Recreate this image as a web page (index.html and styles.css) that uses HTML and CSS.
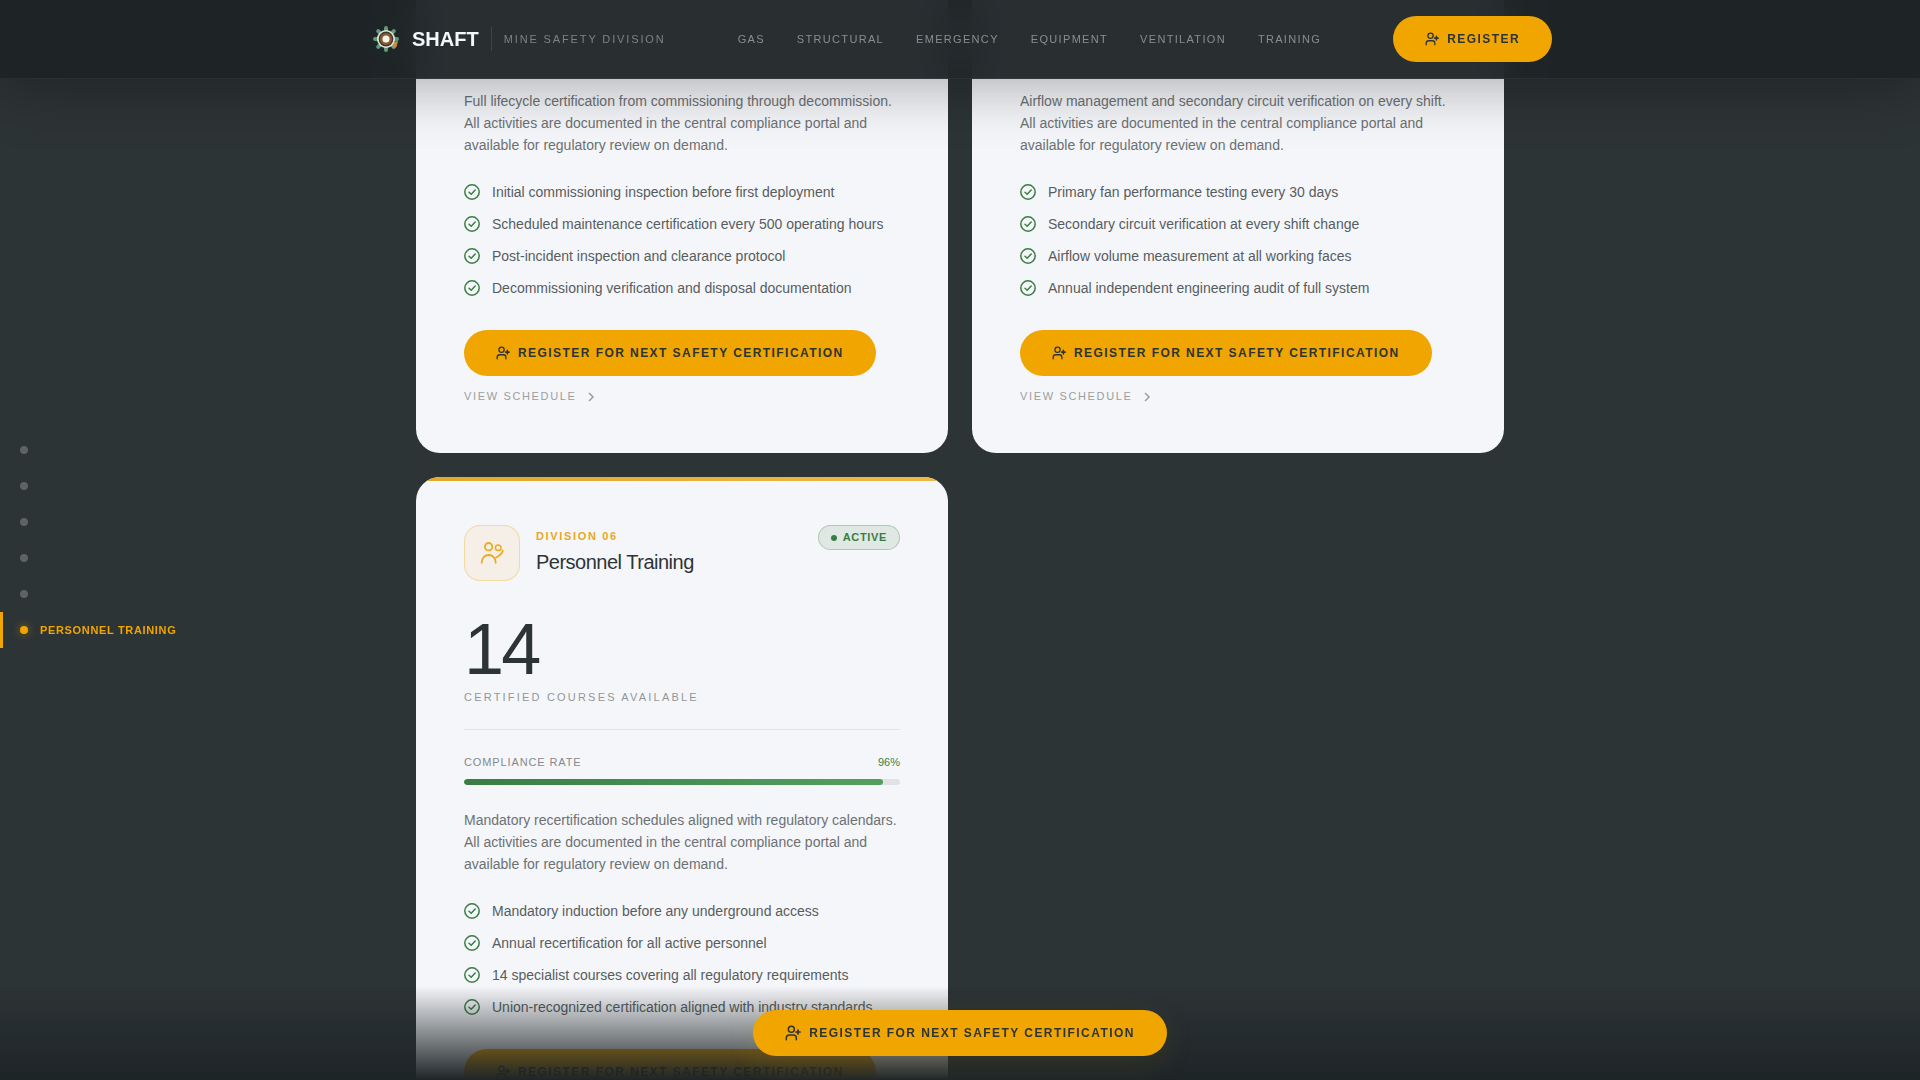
FILE: index.html
```html
<!DOCTYPE html>
<html lang="en">
<head>
    <meta charset="UTF-8">
    <meta name="viewport" content="width=device-width, initial-scale=1.0">
    <title>SHAFT - Mine Safety Division</title>
    <link rel="stylesheet" href="styles.css">
</head>
<body>
    <!-- shared icons -->
    <svg class="icon-defs" aria-hidden="true">
        <symbol id="icon-register" viewBox="0 0 24 24">
            <g fill="none" stroke="currentColor" stroke-width="2.200" stroke-linecap="round" stroke-linejoin="round">
                <circle cx="9.500" cy="6.500" r="4.500"/>
                <path d="M2 22v-2.500a4.500 4.500 0 0 1 4.500-4.500h6a4.500 4.500 0 0 1 4.500 4.500V22"/>
                <path d="M19.500 7.500v6M16.500 10.500h6" stroke-width="2.600"/>
            </g>
        </symbol>
        <symbol id="icon-check" viewBox="0 0 16 16">
            <g fill="none" stroke="currentColor" stroke-width="1.500" stroke-linecap="round" stroke-linejoin="round">
                <circle cx="8" cy="8" r="7.200"/>
                <path d="M5 8.200l2.200 2L11.200 6"/>
            </g>
        </symbol>
        <symbol id="icon-chevron" viewBox="0 0 16 16">
            <path d="M6 4l4 4-4 4" fill="none" stroke="currentColor" stroke-width="1.500"/>
        </symbol>
    </svg>

    <header class="site-header">
        <div class="header-inner">
            <div class="brand">
                <svg class="brand-logo" viewBox="0 0 36 36" aria-hidden="true">
                    <g stroke="#5f9a78" stroke-width="4" stroke-linecap="round">
                        <path d="M18 7v22M7 18h22M10.200 10.200l15.600 15.600M25.800 10.200L10.200 25.800"/>
                    </g>
                    <path d="M25 21l5-1-1.500 6-4 1.500z" fill="#c88a45"/>
                    <circle cx="18" cy="18" r="9" fill="#dfe9df"/>
                    <circle cx="18" cy="18" r="7.400" fill="#3d3a2c"/>
                    <circle cx="18" cy="18" r="6" fill="#8b5a33"/>
                    <circle cx="18" cy="18" r="3.500" fill="#fff8ea"/>
                </svg>
                <span class="brand-name">SHAFT</span>
                <span class="brand-division">MINE SAFETY DIVISION</span>
            </div>
            <nav class="main-nav">
                <a href="#gas">GAS</a>
                <a href="#structural">STRUCTURAL</a>
                <a href="#emergency">EMERGENCY</a>
                <a href="#equipment">EQUIPMENT</a>
                <a href="#ventilation">VENTILATION</a>
                <a href="#training">TRAINING</a>
            </nav>
            <button class="btn" type="button"><svg class="btn-icon"><use href="#icon-register"/></svg>REGISTER</button>
        </div>
    </header>

    <nav class="side-nav" aria-label="Divisions">
        <a class="side-link" href="#gas" aria-label="Gas"><span class="side-dot"></span></a>
        <a class="side-link" href="#structural" aria-label="Structural"><span class="side-dot"></span></a>
        <a class="side-link" href="#emergency" aria-label="Emergency"><span class="side-dot"></span></a>
        <a class="side-link" href="#equipment" aria-label="Equipment"><span class="side-dot"></span></a>
        <a class="side-link" href="#ventilation" aria-label="Ventilation"><span class="side-dot"></span></a>
        <a class="side-link active" href="#training"><span class="side-dot"></span>PERSONNEL TRAINING</a>
    </nav>

    <main class="cards">
        <article class="card card-continued" id="equipment">
            <p class="card-text">Full lifecycle certification from commissioning through decommission. All activities are documented in the central compliance portal and available for regulatory review on demand.</p>
            <ul class="check-list">
                <li><svg><use href="#icon-check"/></svg>Initial commissioning inspection before first deployment</li>
                <li><svg><use href="#icon-check"/></svg>Scheduled maintenance certification every 500 operating hours</li>
                <li><svg><use href="#icon-check"/></svg>Post-incident inspection and clearance protocol</li>
                <li><svg><use href="#icon-check"/></svg>Decommissioning verification and disposal documentation</li>
            </ul>
            <button class="btn" type="button"><svg class="btn-icon"><use href="#icon-register"/></svg>REGISTER FOR NEXT SAFETY CERTIFICATION</button>
            <a class="schedule-link" href="#schedule">VIEW SCHEDULE<svg><use href="#icon-chevron"/></svg></a>
        </article>

        <article class="card card-continued" id="ventilation">
            <p class="card-text">Airflow management and secondary circuit verification on every shift. All activities are documented in the central compliance portal and available for regulatory review on demand.</p>
            <ul class="check-list">
                <li><svg><use href="#icon-check"/></svg>Primary fan performance testing every 30 days</li>
                <li><svg><use href="#icon-check"/></svg>Secondary circuit verification at every shift change</li>
                <li><svg><use href="#icon-check"/></svg>Airflow volume measurement at all working faces</li>
                <li><svg><use href="#icon-check"/></svg>Annual independent engineering audit of full system</li>
            </ul>
            <button class="btn" type="button"><svg class="btn-icon"><use href="#icon-register"/></svg>REGISTER FOR NEXT SAFETY CERTIFICATION</button>
            <a class="schedule-link" href="#schedule">VIEW SCHEDULE<svg><use href="#icon-chevron"/></svg></a>
        </article>

        <article class="card" id="training">
            <div class="card-head">
                <div class="card-icon">
                    <svg viewBox="0 0 24 24" aria-hidden="true">
                        <g fill="none" stroke="currentColor" stroke-width="1.800" stroke-linecap="round">
                            <circle cx="8.600" cy="5.700" r="3.700"/>
                            <circle cx="18.200" cy="6.700" r="2.800" stroke-width="1.500"/>
                            <path d="M1.700 21.800c0-4.600 3-7.800 7-7.800s7 3.200 7 7.800"/>
                            <path d="M22.600 9.400c.300 3-2.300 4-3.600 5.200-1 .900-1.800 1.700-3 2"/>
                        </g>
                    </svg>
                </div>
                <div class="card-heading">
                    <span class="card-division">DIVISION 06</span>
                    <h2 class="card-title">Personnel Training</h2>
                </div>
                <span class="badge">ACTIVE</span>
            </div>
            <div class="stat">
                <div class="stat-value">14</div>
                <div class="stat-label">CERTIFIED COURSES AVAILABLE</div>
            </div>
            <div class="rate-head">
                <span>COMPLIANCE RATE</span>
                <span class="rate-value">96%</span>
            </div>
            <div class="rate-bar"><div class="rate-fill" style="width: 96%"></div></div>
            <p class="card-text">Mandatory recertification schedules aligned with regulatory calendars. All activities are documented in the central compliance portal and available for regulatory review on demand.</p>
            <ul class="check-list">
                <li><svg><use href="#icon-check"/></svg>Mandatory induction before any underground access</li>
                <li><svg><use href="#icon-check"/></svg>Annual recertification for all active personnel</li>
                <li><svg><use href="#icon-check"/></svg>14 specialist courses covering all regulatory requirements</li>
                <li><svg><use href="#icon-check"/></svg>Union-recognized certification aligned with industry standards</li>
            </ul>
            <button class="btn" type="button"><svg class="btn-icon"><use href="#icon-register"/></svg>REGISTER FOR NEXT SAFETY CERTIFICATION</button>
        </article>
    </main>

    <div class="sticky-cta">
        <button class="btn btn-float" type="button"><svg class="btn-icon"><use href="#icon-register"/></svg>REGISTER FOR NEXT SAFETY CERTIFICATION</button>
    </div>
</body>
</html>
```

FILE: styles.css
```css
:root {
    --bg: #2d3436;
    --dark: #1e2527;
    --card: #f5f6fa;
    --amber: #f0a500;
    --green: #3a7d44;
}

* {
    box-sizing: border-box;
    margin: 0;
    padding: 0;
}

html {
    scrollbar-width: none;
}

body {
    font-family: "Liberation Sans", Arial, sans-serif;
    font-size: 14px;
    background: var(--bg);
    color: var(--bg);
}

a {
    text-decoration: none;
}

.icon-defs {
    position: absolute;
    width: 0;
    height: 0;
}

/* Header */
.site-header {
    position: fixed;
    top: 0;
    left: 0;
    right: 0;
    z-index: 10;
    background: rgba(30, 36, 38, 0.95);
    backdrop-filter: blur(20px);
    border-bottom: 1px solid rgba(255, 255, 255, 0.05);
    box-shadow: 0 8px 60px rgba(0, 0, 0, 0.3);
}

.header-inner {
    max-width: 1280px;
    margin: 0 auto;
    padding: 16px 48px;
    display: flex;
    align-items: center;
    justify-content: space-between;
}

.brand {
    display: flex;
    align-items: center;
}

.brand-logo {
    width: 36px;
    height: 36px;
    margin-right: 8px;
}

.brand-name {
    font-size: 20px;
    font-weight: 700;
    color: var(--card);
}

.brand-division {
    margin-left: 12px;
    padding-left: 12px;
    border-left: 1px solid rgba(255, 255, 255, 0.1);
    font-size: 11px;
    line-height: 24px;
    letter-spacing: 0.17em;
    color: #7d8284;
}

.main-nav {
    display: flex;
    gap: 32px;
}

.main-nav a {
    font-size: 11px;
    letter-spacing: 0.12em;
    color: #898d8f;
}

/* Buttons */
.btn {
    display: inline-flex;
    align-items: center;
    gap: 8px;
    height: 46px;
    padding: 0 32px;
    border: none;
    border-radius: 24px;
    background: var(--amber);
    color: var(--bg);
    font-family: inherit;
    font-size: 12px;
    font-weight: 700;
    letter-spacing: 0.12em;
    cursor: pointer;
}

.btn-icon {
    width: 14px;
    height: 14px;
}

/* Side navigation */
.side-nav {
    position: fixed;
    left: 0;
    top: 50%;
    transform: translateY(-50%);
    z-index: 5;
    display: flex;
    flex-direction: column;
}

.side-link {
    display: flex;
    align-items: center;
    gap: 12px;
    height: 36px;
    padding-left: 17px;
    border-left: 3px solid transparent;
    font-size: 11px;
    font-weight: 700;
    letter-spacing: 0.06em;
    color: var(--amber);
}

.side-dot {
    width: 8px;
    height: 8px;
    border-radius: 50%;
    background: #5d6364;
}

.side-link.active {
    border-left-color: var(--amber);
}

.side-link.active .side-dot {
    background: var(--amber);
    box-shadow: 0 0 8px rgba(240, 165, 0, 0.5);
}

/* Division cards */
.cards {
    max-width: 1280px;
    margin: 0 auto;
    padding: 0 96px 96px;
    display: grid;
    grid-template-columns: 1fr 1fr;
    gap: 24px;
}

.card {
    position: relative;
    overflow: hidden;
    padding: 48px;
    border-radius: 24px;
    background: var(--card);
}

.card::before {
    content: "";
    position: absolute;
    top: 0;
    left: 0;
    right: 0;
    height: 4px;
    background: linear-gradient(90deg, #e0a82a, #ecb94a);
}

.card-continued {
    padding-top: 90px;
    border-radius: 0 0 24px 24px;
}

.card-continued::before {
    display: none;
}

.card-head {
    display: flex;
    align-items: flex-start;
    gap: 16px;
    margin-bottom: 32px;
}

.card-icon {
    display: flex;
    align-items: center;
    justify-content: center;
    width: 56px;
    height: 56px;
    border: 1px solid rgba(240, 165, 0, 0.3);
    border-radius: 16px;
    background: #f5efe8;
    color: #e9ac22;
}

.card-icon svg {
    width: 24px;
    height: 24px;
}

.card-heading {
    flex: 1;
    display: flex;
    flex-direction: column;
    gap: 4px;
    padding-top: 3px;
}

.card-division {
    font-size: 11px;
    font-weight: 700;
    line-height: 16px;
    letter-spacing: 0.15em;
    color: #e9a820;
}

.card-title {
    font-size: 20px;
    font-weight: 400;
    line-height: 28px;
    letter-spacing: -0.025em;
}

.badge {
    display: flex;
    align-items: center;
    gap: 6px;
    padding: 6px 12px;
    border: 1px solid rgba(58, 125, 68, 0.3);
    border-radius: 16px;
    background: #dfe8e3;
    font-size: 11px;
    font-weight: 700;
    line-height: 11px;
    letter-spacing: 0.06em;
    color: var(--green);
}

.badge::before {
    content: "";
    width: 6px;
    height: 6px;
    border-radius: 50%;
    background: var(--green);
}

.stat {
    padding-bottom: 24px;
    margin-bottom: 24px;
    border-bottom: 1px solid #e2e4e7;
}

.stat-value {
    font-size: 72px;
    line-height: 72px;
    letter-spacing: -0.04em;
}

.stat-label {
    margin-top: 4px;
    font-size: 11px;
    line-height: 16px;
    letter-spacing: 0.2em;
    color: #929698;
}

.rate-head {
    display: flex;
    justify-content: space-between;
    margin-bottom: 8px;
    font-size: 11px;
    line-height: 17px;
    letter-spacing: 0.08em;
    color: #85898c;
}

.rate-value {
    letter-spacing: normal;
    color: var(--green);
}

.rate-bar {
    height: 6px;
    margin-bottom: 24px;
    border-radius: 3px;
    overflow: hidden;
    background: #e0e2e5;
}

.rate-fill {
    height: 100%;
    border-radius: 3px;
    background: linear-gradient(90deg, #3a7d44, #52a060);
}

.card-text {
    margin-bottom: 25px;
    line-height: 22px;
    color: #6c7173;
}

.check-list {
    display: flex;
    flex-direction: column;
    gap: 10px;
    margin-bottom: 31px;
    list-style: none;
}

.check-list li {
    display: flex;
    align-items: center;
    gap: 12px;
    line-height: 22px;
    color: #575d5f;
}

.check-list svg {
    width: 16px;
    height: 16px;
    color: var(--green);
}

.schedule-link {
    display: flex;
    align-items: center;
    gap: 6px;
    margin-top: 12px;
    font-size: 11px;
    line-height: 17px;
    letter-spacing: 0.15em;
    color: #9a9ea0;
}

.schedule-link svg {
    width: 16px;
    height: 16px;
}

/* Floating call to action */
.sticky-cta {
    position: fixed;
    left: 0;
    right: 0;
    bottom: 0;
    z-index: 8;
    display: flex;
    justify-content: center;
    padding: 24px;
    background: linear-gradient(to top, var(--dark), transparent);
}

.btn-float {
    box-shadow: 0 8px 32px rgba(240, 165, 0, 0.1);
}

.btn-float .btn-icon {
    width: 16px;
    height: 16px;
}
```
